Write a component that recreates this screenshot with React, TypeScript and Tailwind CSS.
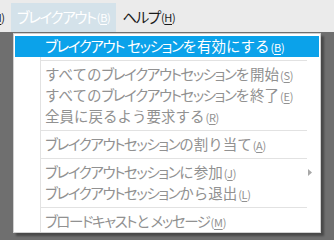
import React from 'react';

type Row =
  | { kind: 'item'; label: string; key: string; active?: boolean; sub?: boolean }
  | { kind: 'sep' };

const rows: Row[] = [
  { kind: 'item', label: 'ブレイクアウト セッションを有効にする', key: 'B', active: true },
  { kind: 'sep' },
  { kind: 'item', label: 'すべてのブレイクアウトセッションを開始', key: 'S' },
  { kind: 'item', label: 'すべてのブレイクアウトセッションを終了', key: 'E' },
  { kind: 'item', label: '全員に戻るよう要求する', key: 'R' },
  { kind: 'sep' },
  { kind: 'item', label: 'ブレイクアウトセッションの割り当て', key: 'A' },
  { kind: 'sep' },
  { kind: 'item', label: 'ブレイクアウトセッションに参加', key: 'J', sub: true },
  { kind: 'item', label: 'ブレイクアウトセッションから退出', key: 'L' },
  { kind: 'sep' },
  { kind: 'item', label: 'ブロードキャストとメッセージ', key: 'M' },
];

// katakana runs are set proportional and tight, the rest stays full width (like Meiryo UI)
const Ja: React.FC<{ text: string }> = ({ text }) => (
  <>
    {text.split(/([\u30A0-\u30FF]+)/).map((part, i) =>
      /[\u30A0-\u30FF]/.test(part) ? (
        <span key={i} className="tracking-[-1.4px] [font-feature-settings:'palt']">
          {part}
        </span>
      ) : (
        <span key={i}>{part}</span>
      )
    )}
  </>
);

const Mnemonic: React.FC<{ k: string }> = ({ k }) => (
  <span className="text-[11px] tracking-[-0.3px] ml-[1px]">
    (<span className="underline underline-offset-2">{k}</span>)
  </span>
);

const MenuRow: React.FC<{ row: Row }> = ({ row }) => {
  if (row.kind === 'sep') {
    return (
      <div className="flex h-[7px]">
        <div className="w-[26px] shrink-0 border-r border-[#e2e2e2]" />
        <div className="flex-1 flex items-center mr-[12px]">
          <div className="h-px w-full bg-[#e2e2e2]" />
        </div>
      </div>
    );
  }

  if (row.active) {
    return (
      <div className="flex h-[21px] items-center bg-[#0ba2ea] text-white">
        <div className="w-[26px] shrink-0" />
        <div className="pl-[4px] whitespace-nowrap">
          <Ja text={row.label} />
          <Mnemonic k={row.key} />
        </div>
      </div>
    );
  }

  return (
    <div className="flex h-[21px] text-[#919191]">
      <div className="w-[26px] shrink-0 border-r border-[#e2e2e2]" />
      <div className="flex-1 flex items-center pl-[4px] whitespace-nowrap">
        <span>
          <Ja text={row.label} />
          <Mnemonic k={row.key} />
        </span>
        {row.sub && (
          <svg className="ml-auto mr-[7px]" width="4" height="7" viewBox="0 0 4 7">
            <path d="M0 0 L4 3.5 L0 7 Z" fill="#a8a8a8" />
          </svg>
        )}
      </div>
    </div>
  );
};

export default function App() {
  return (
    <div className="relative w-[334px] h-[240px] overflow-hidden bg-[#6f6f6f] text-[14.5px] leading-none font-['Noto_Sans_CJK_JP','Noto_Sans',sans-serif]">
      <div className="flex h-[32px] pt-[3px] bg-[#ebebeb] text-[#1b1b1b] overflow-hidden">
        <div className="flex items-center ml-[-6px] pr-[6px] whitespace-nowrap">
          <Mnemonic k="I" />
        </div>
        <div className="flex items-center px-[6px] bg-[#d4e2ea] text-white whitespace-nowrap">
          <Ja text="ブレイクアウト" />
          <Mnemonic k="B" />
        </div>
        <div className="flex items-center px-[6px] whitespace-nowrap">
          <Ja text="ヘルプ" />
          <Mnemonic k="H" />
        </div>
      </div>

      <div className="absolute left-[13px] top-[33px] w-[308px] h-[200px] bg-white border border-[#d0d0d0] px-px pt-[2px] shadow-[3px_3px_2px_rgba(0,0,0,0.35)]">
        {rows.map((row, i) => (
          <MenuRow key={i} row={row} />
        ))}
      </div>
    </div>
  );
}
